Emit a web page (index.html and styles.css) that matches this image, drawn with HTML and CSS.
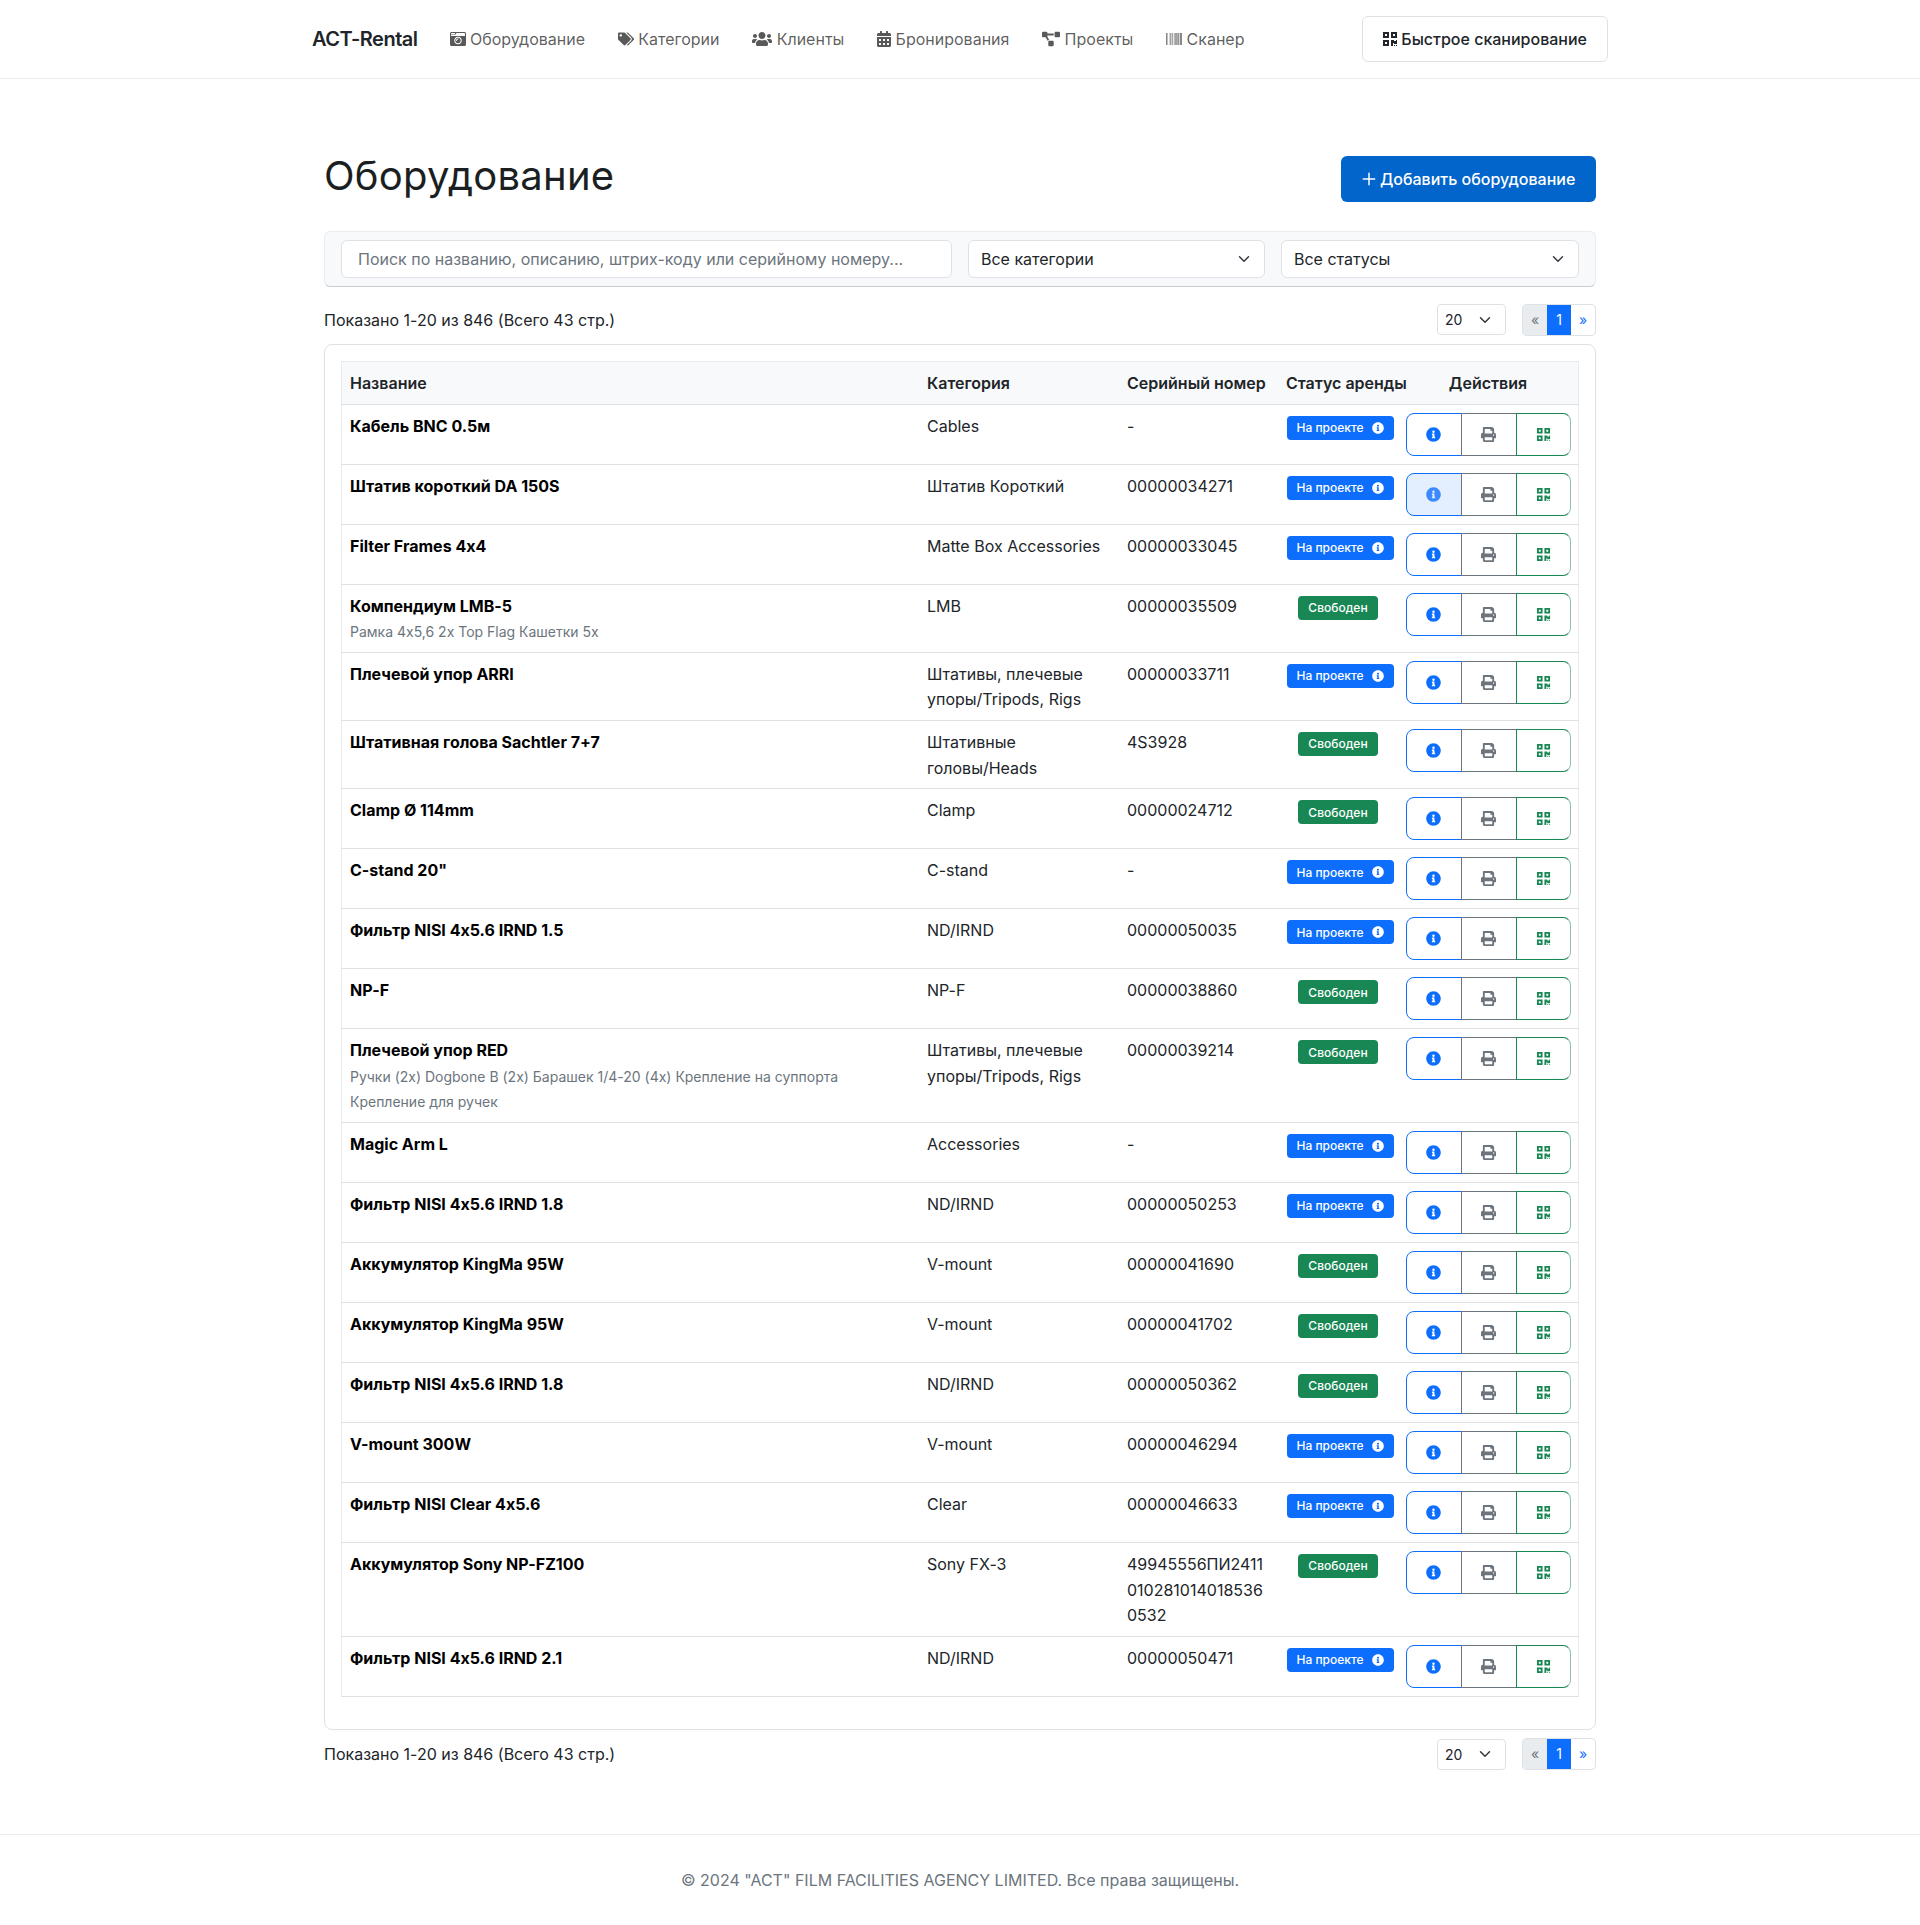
FILE: index.html
```html
<!DOCTYPE html>
<html lang="ru">
<head>
    <meta charset="UTF-8">
    <meta name="viewport" content="width=device-width, initial-scale=1.0">

    <title>Оборудование - ACT-Rental</title>

    <link rel="stylesheet" href="styles.css">

</head>
<body>

    <svg class="icon-defs" xmlns="http://www.w3.org/2000/svg">
        <symbol id="i-camera" viewBox="0 0 512 512"><path d="M48 32C21.5 32 0 53.5 0 80v352c0 26.5 21.5 48 48 48h416c26.5 0 48-21.5 48-48V80c0-26.5-21.5-48-48-48H48zm0 32h106c3.3 0 6 2.7 6 6v20c0 3.3-2.7 6-6 6H38c-3.3 0-6-2.7-6-6V80c0-8.8 7.2-16 16-16zm426 96H38c-3.3 0-6-2.7-6-6v-36c0-3.3 2.7-6 6-6h138l30.2-45.3c1.1-1.7 3-2.7 5-2.7H464c8.8 0 16 7.2 16 16v74c0 3.3-2.7 6-6 6zM256 424c-66.2 0-120-53.8-120-120s53.8-120 120-120 120 53.8 120 120-53.8 120-120 120zm0-208c-48.5 0-88 39.5-88 88s39.5 88 88 88 88-39.5 88-88-39.5-88-88-88zm-48 104c-8.8 0-16-7.2-16-16 0-35.3 28.7-64 64-64 8.8 0 16 7.2 16 16s-7.2 16-16 16c-17.6 0-32 14.4-32 32 0 8.8-7.2 16-16 16z"/></symbol>
        <symbol id="i-tags" viewBox="0 0 640 512"><path d="M497.941 225.941L286.059 14.059A48 48 0 0 0 252.118 0H48C21.49 0 0 21.49 0 48v204.118a48 48 0 0 0 14.059 33.941l211.882 211.882c18.744 18.745 49.136 18.746 67.882 0l204.118-204.118c18.745-18.745 18.745-49.137 0-67.882zM112 160c-26.51 0-48-21.49-48-48s21.49-48 48-48 48 21.49 48 48-21.49 48-48 48zm513.941 133.823L421.823 497.941c-18.745 18.745-49.137 18.745-67.882 0l-.36-.36L527.64 323.522c16.999-16.999 26.36-39.6 26.36-63.64s-9.362-46.641-26.36-63.64L331.397 0h48.721a48 48 0 0 1 33.941 14.059l211.882 211.882c18.745 18.745 18.745 49.137 0 67.882z"/></symbol>
        <symbol id="i-users" viewBox="0 0 640 512"><path d="M96 224c35.3 0 64-28.7 64-64s-28.7-64-64-64-64 28.7-64 64 28.7 64 64 64zm448 0c35.3 0 64-28.7 64-64s-28.7-64-64-64-64 28.7-64 64 28.7 64 64 64zm32 32h-64c-17.6 0-33.5 7.1-45.1 18.6 40.3 22.1 68.9 62 75.1 109.4h66c17.7 0 32-14.3 32-32v-32c0-35.3-28.7-64-64-64zm-256 0c61.9 0 112-50.1 112-112S381.9 32 320 32 208 82.1 208 144s50.1 112 112 112zm76.8 32h-8.3c-20.8 10-43.9 16-68.5 16s-47.6-6-68.5-16h-8.3C179.6 288 128 339.6 128 403.2V432c0 26.5 21.5 48 48 48h288c26.5 0 48-21.5 48-48v-28.8c0-63.6-51.6-115.2-115.2-115.2zm-223.7-13.4C161.5 263.1 145.6 256 128 256H64c-35.3 0-64 28.7-64 64v32c0 17.7 14.3 32 32 32h65.9c6.3-47.4 34.9-87.3 75.2-109.4z"/></symbol>
        <symbol id="i-calendar" viewBox="0 0 448 512"><path d="M0 464c0 26.5 21.5 48 48 48h352c26.5 0 48-21.5 48-48V192H0v272zm320-196c0-6.6 5.4-12 12-12h40c6.6 0 12 5.4 12 12v40c0 6.6-5.4 12-12 12h-40c-6.6 0-12-5.4-12-12v-40zm0 128c0-6.6 5.4-12 12-12h40c6.6 0 12 5.4 12 12v40c0 6.6-5.4 12-12 12h-40c-6.6 0-12-5.4-12-12v-40zM192 268c0-6.6 5.4-12 12-12h40c6.6 0 12 5.4 12 12v40c0 6.6-5.4 12-12 12h-40c-6.6 0-12-5.4-12-12v-40zm0 128c0-6.6 5.4-12 12-12h40c6.6 0 12 5.4 12 12v40c0 6.6-5.4 12-12 12h-40c-6.6 0-12-5.4-12-12v-40zM64 268c0-6.6 5.4-12 12-12h40c6.6 0 12 5.4 12 12v40c0 6.6-5.4 12-12 12H76c-6.6 0-12-5.4-12-12v-40zm0 128c0-6.6 5.4-12 12-12h40c6.6 0 12 5.4 12 12v40c0 6.6-5.4 12-12 12H76c-6.6 0-12-5.4-12-12v-40zM400 64h-48V16c0-8.8-7.2-16-16-16h-32c-8.8 0-16 7.2-16 16v48H160V16c0-8.8-7.2-16-16-16h-32c-8.8 0-16 7.2-16 16v48H48C21.5 64 0 85.5 0 112v48h448v-48c0-26.5-21.5-48-48-48z"/></symbol>
        <symbol id="i-diagram" viewBox="0 0 640 512"><path d="M384 320H256c-17.67 0-32 14.33-32 32v128c0 17.67 14.33 32 32 32h128c17.67 0 32-14.33 32-32V352c0-17.67-14.33-32-32-32zM192 32c0-17.67-14.33-32-32-32H32C14.33 0 0 14.33 0 32v128c0 17.67 14.33 32 32 32h95.72l73.16 128.04C211.98 300.98 232.4 288 256 288h.28L192 175.51V128h224V64H192V32zM608 0H480c-17.67 0-32 14.33-32 32v128c0 17.67 14.33 32 32 32h128c17.67 0 32-14.33 32-32V32c0-17.67-14.33-32-32-32z"/></symbol>
        <symbol id="i-barcode" viewBox="0 0 512 512"><path d="M0 448V64h18v384H0zm26.857-.273V64H36v383.727h-9.143zm27.143 0V64h8.857v383.727H54zm44.857 0V64h8.857v383.727h-8.857zm36 0V64h17.714v383.727h-17.714zm44.857 0V64h8.857v383.727h-8.857zm18 0V64h8.857v383.727h-8.857zm18 0V64h8.857v383.727h-8.857zm35.715 0V64h18v383.727h-18zm44.857 0V64h18v383.727h-18zm35.999 0V64h18.001v383.727h-18.001zm36.001 0V64h18.001v383.727h-18.001zm26.857 0V64h18v383.727h-18zm45.143 0V64h26.857v383.727h-26.857zm35.714 0V64h9.143v383.727H428zm18 .273V64h18v384h-18z"/></symbol>
        <symbol id="i-qr" viewBox="0 0 448 512"><path d="M0 224h192V32H0v192zM64 96h64v64H64V96zm192-64v192h192V32H256zm128 128h-64V96h64v64zM0 480h192V288H0v192zm64-128h64v64H64v-64zm352-64h32v128h-96v-32h-32v96h-64V288h96v32h64v-32zm0 160h32v32h-32v-32zm-64 0h32v32h-32v-32z"/></symbol>
        <symbol id="i-info" viewBox="0 0 512 512"><path d="M256 8C119.043 8 8 119.083 8 256c0 136.997 111.043 248 248 248s248-111.003 248-248C504 119.083 392.957 8 256 8zm0 110c23.196 0 42 18.804 42 42s-18.804 42-42 42-42-18.804-42-42 18.804-42 42-42zm56 254c0 6.627-5.373 12-12 12h-88c-6.627 0-12-5.373-12-12v-24c0-6.627 5.373-12 12-12h12v-64h-12c-6.627 0-12-5.373-12-12v-24c0-6.627 5.373-12 12-12h64c6.627 0 12 5.373 12 12v100h12c6.627 0 12 5.373 12 12v24z"/></symbol>
        <symbol id="i-print" viewBox="0 0 512 512"><path d="M448 192V77.25c0-8.49-3.37-16.62-9.37-22.63L393.37 9.37c-6-6-14.14-9.37-22.63-9.37H96C78.33 0 64 14.33 64 32v160c-35.35 0-64 28.65-64 64v112c0 8.84 7.16 16 16 16h48v96c0 17.67 14.33 32 32 32h320c17.67 0 32-14.33 32-32v-96h48c8.84 0 16-7.16 16-16V256c0-35.35-28.65-64-64-64zm-64 256H128v-96h256v96zm0-224H128V64h192v48c0 8.84 7.16 16 16 16h48v96zm48 72c-13.25 0-24-10.75-24-24 0-13.26 10.75-24 24-24s24 10.74 24 24c0 13.25-10.75 24-24 24z"/></symbol>
        <symbol id="i-plus" viewBox="0 0 16 16"><path d="M8 1.5v13M1.5 8h13" fill="none" stroke="currentColor" stroke-width="1.7" stroke-linecap="round"/></symbol>
    </svg>

    <nav class="navbar">
        <div class="navbar-inner">
            <a class="brand" href="#">ACT-Rental</a>
            <ul class="nav-list">
                <li><a href="#"><svg class="icon w16"><use href="#i-camera"/></svg> Оборудование</a></li>
                <li><a href="#"><svg class="icon w16"><use href="#i-tags"/></svg> Категории</a></li>
                <li><a href="#"><svg class="icon w20"><use href="#i-users"/></svg> Клиенты</a></li>
                <li><a href="#"><svg class="icon w14"><use href="#i-calendar"/></svg> Бронирования</a></li>
                <li><a href="#"><svg class="icon w18"><use href="#i-diagram"/></svg> Проекты</a></li>
                <li><a href="#"><svg class="icon w16"><use href="#i-barcode"/></svg> Сканер</a></li>
            </ul>
            <button class="btn-scan" type="button"><svg class="icon w14"><use href="#i-qr"/></svg> Быстрое сканирование</button>
        </div>
    </nav>

    <main class="page">

        <div class="page-head">
            <h1>Оборудование</h1>
            <button class="btn-add" type="button"><svg class="icon w14"><use href="#i-plus"/></svg> Добавить оборудование</button>
        </div>

        <div class="filters">
            <input class="filter-search" type="text" placeholder="Поиск по названию, описанию, штрих-коду или серийному номеру...">
            <select class="filter-select">
                <option>Все категории</option>
            </select>
            <select class="filter-select">
                <option>Все статусы</option>
            </select>
        </div>

        <div class="list-bar">
            <span>Показано 1-20 из 846 (Всего 43 стр.)</span>
            <div class="list-tools">
                <select class="per-page">
                    <option>20</option>
                </select>
                <ul class="pager">
                    <li class="off">«</li>
                    <li class="on">1</li>
                    <li>»</li>
                </ul>
            </div>
        </div>

        <div class="table-card">
            <table class="items">
                <thead>
                    <tr>
                        <th class="col-name">Название</th>
                        <th class="col-cat">Категория</th>
                        <th class="col-serial">Серийный номер</th>
                        <th class="col-status">Статус аренды</th>
                        <th class="col-actions">Действия</th>
                    </tr>
                </thead>
                <tbody>
                    <tr>
                        <td><b>Кабель BNC 0.5м</b></td>
                        <td>Cables</td>
                        <td>-</td>
                        <td class="cell-status"><span class="badge busy">На проекте <svg class="icon w12"><use href="#i-info"/></svg></span></td>
                        <td><div class="actions"><a class="act blue" href="#"><svg class="icon"><use href="#i-info"/></svg></a><a class="act gray" href="#"><svg class="icon"><use href="#i-print"/></svg></a><a class="act green" href="#"><svg class="icon"><use href="#i-qr"/></svg></a></div></td>
                    </tr>
                    <tr>
                        <td><b>Штатив короткий DA 150S</b></td>
                        <td>Штатив Короткий</td>
                        <td>00000034271</td>
                        <td class="cell-status"><span class="badge busy">На проекте <svg class="icon w12"><use href="#i-info"/></svg></span></td>
                        <td><div class="actions"><a class="act blue hover" href="#"><svg class="icon"><use href="#i-info"/></svg></a><a class="act gray" href="#"><svg class="icon"><use href="#i-print"/></svg></a><a class="act green" href="#"><svg class="icon"><use href="#i-qr"/></svg></a></div></td>
                    </tr>
                    <tr>
                        <td><b>Filter Frames 4x4</b></td>
                        <td>Matte Box Accessories</td>
                        <td>00000033045</td>
                        <td class="cell-status"><span class="badge busy">На проекте <svg class="icon w12"><use href="#i-info"/></svg></span></td>
                        <td><div class="actions"><a class="act blue" href="#"><svg class="icon"><use href="#i-info"/></svg></a><a class="act gray" href="#"><svg class="icon"><use href="#i-print"/></svg></a><a class="act green" href="#"><svg class="icon"><use href="#i-qr"/></svg></a></div></td>
                    </tr>
                    <tr>
                        <td><b>Компендиум LMB-5</b><br><small>Рамка 4x5,6 2x Top Flag Кашетки 5x</small></td>
                        <td>LMB</td>
                        <td>00000035509</td>
                        <td class="cell-status"><span class="badge free">Свободен</span></td>
                        <td><div class="actions"><a class="act blue" href="#"><svg class="icon"><use href="#i-info"/></svg></a><a class="act gray" href="#"><svg class="icon"><use href="#i-print"/></svg></a><a class="act green" href="#"><svg class="icon"><use href="#i-qr"/></svg></a></div></td>
                    </tr>
                    <tr>
                        <td><b>Плечевой упор ARRI</b></td>
                        <td>Штативы, плечевые упоры/Tripods, Rigs</td>
                        <td>00000033711</td>
                        <td class="cell-status"><span class="badge busy">На проекте <svg class="icon w12"><use href="#i-info"/></svg></span></td>
                        <td><div class="actions"><a class="act blue" href="#"><svg class="icon"><use href="#i-info"/></svg></a><a class="act gray" href="#"><svg class="icon"><use href="#i-print"/></svg></a><a class="act green" href="#"><svg class="icon"><use href="#i-qr"/></svg></a></div></td>
                    </tr>
                    <tr>
                        <td><b>Штативная голова Sachtler 7+7</b></td>
                        <td>Штативные головы/Heads</td>
                        <td>4S3928</td>
                        <td class="cell-status"><span class="badge free">Свободен</span></td>
                        <td><div class="actions"><a class="act blue" href="#"><svg class="icon"><use href="#i-info"/></svg></a><a class="act gray" href="#"><svg class="icon"><use href="#i-print"/></svg></a><a class="act green" href="#"><svg class="icon"><use href="#i-qr"/></svg></a></div></td>
                    </tr>
                    <tr>
                        <td><b>Clamp Ø 114mm</b></td>
                        <td>Clamp</td>
                        <td>00000024712</td>
                        <td class="cell-status"><span class="badge free">Свободен</span></td>
                        <td><div class="actions"><a class="act blue" href="#"><svg class="icon"><use href="#i-info"/></svg></a><a class="act gray" href="#"><svg class="icon"><use href="#i-print"/></svg></a><a class="act green" href="#"><svg class="icon"><use href="#i-qr"/></svg></a></div></td>
                    </tr>
                    <tr>
                        <td><b>C-stand 20"</b></td>
                        <td>C-stand</td>
                        <td>-</td>
                        <td class="cell-status"><span class="badge busy">На проекте <svg class="icon w12"><use href="#i-info"/></svg></span></td>
                        <td><div class="actions"><a class="act blue" href="#"><svg class="icon"><use href="#i-info"/></svg></a><a class="act gray" href="#"><svg class="icon"><use href="#i-print"/></svg></a><a class="act green" href="#"><svg class="icon"><use href="#i-qr"/></svg></a></div></td>
                    </tr>
                    <tr>
                        <td><b>Фильтр NISI 4x5.6 IRND 1.5</b></td>
                        <td>ND/IRND</td>
                        <td>00000050035</td>
                        <td class="cell-status"><span class="badge busy">На проекте <svg class="icon w12"><use href="#i-info"/></svg></span></td>
                        <td><div class="actions"><a class="act blue" href="#"><svg class="icon"><use href="#i-info"/></svg></a><a class="act gray" href="#"><svg class="icon"><use href="#i-print"/></svg></a><a class="act green" href="#"><svg class="icon"><use href="#i-qr"/></svg></a></div></td>
                    </tr>
                    <tr>
                        <td><b>NP-F</b></td>
                        <td>NP-F</td>
                        <td>00000038860</td>
                        <td class="cell-status"><span class="badge free">Свободен</span></td>
                        <td><div class="actions"><a class="act blue" href="#"><svg class="icon"><use href="#i-info"/></svg></a><a class="act gray" href="#"><svg class="icon"><use href="#i-print"/></svg></a><a class="act green" href="#"><svg class="icon"><use href="#i-qr"/></svg></a></div></td>
                    </tr>
                    <tr>
                        <td><b>Плечевой упор RED</b><br><small>Ручки (2x) Dogbone B (2x) Барашек 1/4-20 (4x) Крепление на суппорта Крепление для ручек</small></td>
                        <td>Штативы, плечевые упоры/Tripods, Rigs</td>
                        <td>00000039214</td>
                        <td class="cell-status"><span class="badge free">Свободен</span></td>
                        <td><div class="actions"><a class="act blue" href="#"><svg class="icon"><use href="#i-info"/></svg></a><a class="act gray" href="#"><svg class="icon"><use href="#i-print"/></svg></a><a class="act green" href="#"><svg class="icon"><use href="#i-qr"/></svg></a></div></td>
                    </tr>
                    <tr>
                        <td><b>Magic Arm L</b></td>
                        <td>Accessories</td>
                        <td>-</td>
                        <td class="cell-status"><span class="badge busy">На проекте <svg class="icon w12"><use href="#i-info"/></svg></span></td>
                        <td><div class="actions"><a class="act blue" href="#"><svg class="icon"><use href="#i-info"/></svg></a><a class="act gray" href="#"><svg class="icon"><use href="#i-print"/></svg></a><a class="act green" href="#"><svg class="icon"><use href="#i-qr"/></svg></a></div></td>
                    </tr>
                    <tr>
                        <td><b>Фильтр NISI 4x5.6 IRND 1.8</b></td>
                        <td>ND/IRND</td>
                        <td>00000050253</td>
                        <td class="cell-status"><span class="badge busy">На проекте <svg class="icon w12"><use href="#i-info"/></svg></span></td>
                        <td><div class="actions"><a class="act blue" href="#"><svg class="icon"><use href="#i-info"/></svg></a><a class="act gray" href="#"><svg class="icon"><use href="#i-print"/></svg></a><a class="act green" href="#"><svg class="icon"><use href="#i-qr"/></svg></a></div></td>
                    </tr>
                    <tr>
                        <td><b>Аккумулятор KingMa 95W</b></td>
                        <td>V-mount</td>
                        <td>00000041690</td>
                        <td class="cell-status"><span class="badge free">Свободен</span></td>
                        <td><div class="actions"><a class="act blue" href="#"><svg class="icon"><use href="#i-info"/></svg></a><a class="act gray" href="#"><svg class="icon"><use href="#i-print"/></svg></a><a class="act green" href="#"><svg class="icon"><use href="#i-qr"/></svg></a></div></td>
                    </tr>
                    <tr>
                        <td><b>Аккумулятор KingMa 95W</b></td>
                        <td>V-mount</td>
                        <td>00000041702</td>
                        <td class="cell-status"><span class="badge free">Свободен</span></td>
                        <td><div class="actions"><a class="act blue" href="#"><svg class="icon"><use href="#i-info"/></svg></a><a class="act gray" href="#"><svg class="icon"><use href="#i-print"/></svg></a><a class="act green" href="#"><svg class="icon"><use href="#i-qr"/></svg></a></div></td>
                    </tr>
                    <tr>
                        <td><b>Фильтр NISI 4x5.6 IRND 1.8</b></td>
                        <td>ND/IRND</td>
                        <td>00000050362</td>
                        <td class="cell-status"><span class="badge free">Свободен</span></td>
                        <td><div class="actions"><a class="act blue" href="#"><svg class="icon"><use href="#i-info"/></svg></a><a class="act gray" href="#"><svg class="icon"><use href="#i-print"/></svg></a><a class="act green" href="#"><svg class="icon"><use href="#i-qr"/></svg></a></div></td>
                    </tr>
                    <tr>
                        <td><b>V-mount 300W</b></td>
                        <td>V-mount</td>
                        <td>00000046294</td>
                        <td class="cell-status"><span class="badge busy">На проекте <svg class="icon w12"><use href="#i-info"/></svg></span></td>
                        <td><div class="actions"><a class="act blue" href="#"><svg class="icon"><use href="#i-info"/></svg></a><a class="act gray" href="#"><svg class="icon"><use href="#i-print"/></svg></a><a class="act green" href="#"><svg class="icon"><use href="#i-qr"/></svg></a></div></td>
                    </tr>
                    <tr>
                        <td><b>Фильтр NISI Clear 4x5.6</b></td>
                        <td>Clear</td>
                        <td>00000046633</td>
                        <td class="cell-status"><span class="badge busy">На проекте <svg class="icon w12"><use href="#i-info"/></svg></span></td>
                        <td><div class="actions"><a class="act blue" href="#"><svg class="icon"><use href="#i-info"/></svg></a><a class="act gray" href="#"><svg class="icon"><use href="#i-print"/></svg></a><a class="act green" href="#"><svg class="icon"><use href="#i-qr"/></svg></a></div></td>
                    </tr>
                    <tr>
                        <td><b>Аккумулятор Sony NP-FZ100</b></td>
                        <td>Sony FX-3</td>
                        <td class="cell-serial">49945556ПИ2411010281014018536 0532</td>
                        <td class="cell-status"><span class="badge free">Свободен</span></td>
                        <td><div class="actions"><a class="act blue" href="#"><svg class="icon"><use href="#i-info"/></svg></a><a class="act gray" href="#"><svg class="icon"><use href="#i-print"/></svg></a><a class="act green" href="#"><svg class="icon"><use href="#i-qr"/></svg></a></div></td>
                    </tr>
                    <tr>
                        <td><b>Фильтр NISI 4x5.6 IRND 2.1</b></td>
                        <td>ND/IRND</td>
                        <td>00000050471</td>
                        <td class="cell-status"><span class="badge busy">На проекте <svg class="icon w12"><use href="#i-info"/></svg></span></td>
                        <td><div class="actions"><a class="act blue" href="#"><svg class="icon"><use href="#i-info"/></svg></a><a class="act gray" href="#"><svg class="icon"><use href="#i-print"/></svg></a><a class="act green" href="#"><svg class="icon"><use href="#i-qr"/></svg></a></div></td>
                    </tr>
                </tbody>
            </table>
        </div>

        <div class="list-bar">
            <span>Показано 1-20 из 846 (Всего 43 стр.)</span>
            <div class="list-tools">
                <select class="per-page">
                    <option>20</option>
                </select>
                <ul class="pager">
                    <li class="off">«</li>
                    <li class="on">1</li>
                    <li>»</li>
                </ul>
            </div>
        </div>

    </main>

    <footer class="footer">© 2024 "ACT" FILM FACILITIES AGENCY LIMITED. Все права защищены.</footer>

</body>
</html>
```

FILE: styles.css
```css
* {
    font-feature-settings: "calt" 0;
}
body {
    margin: 0;
    font-family: Inter, "Noto Sans", sans-serif;
    font-size: 16px;
    line-height: 1.6;
    color: #212529;
    background-color: #fff;
}
a {
    color: inherit;
    text-decoration: none;
}
.icon-defs {
    display: none;
}
.icon {
    display: inline-block;
    height: 1em;
    width: 1em;
    fill: currentColor;
    vertical-align: -0.125em;
}
.w12 { width: 12px; height: 12px; }
.w14 { width: 14px; }
.w16 { width: 16px; }
.w18 { width: 18px; }
.w20 { width: 20px; }

/* navbar */
.navbar {
    padding: 16px 0;
    border-bottom: 1px solid #e9ecef;
}
.navbar-inner {
    width: 1296px;
    margin: 0 auto;
    display: flex;
    align-items: center;
}
.brand {
    font-size: 20px;
    font-weight: 600;
    letter-spacing: -0.025em;
    margin-right: 16px;
}
.nav-list {
    display: flex;
    flex: 1;
    list-style: none;
    margin: 0;
    padding: 0;
}
.nav-list a {
    display: block;
    padding: 9px 16.7px 7px 16px;
    color: rgba(0, 0, 0, .65);
}
.btn-scan {
    height: 46px;
    padding: 1px 20px 0;
    border: 1px solid #dee2e6;
    border-radius: 6px;
    background-color: #fff;
    color: #212529;
    font: 500 16px/1.6 Inter, sans-serif;
}

/* page */
.page {
    width: 1272px;
    margin: 0 auto;
    padding-top: 72px;
}
.page-head {
    display: flex;
    justify-content: space-between;
    align-items: center;
    margin-bottom: 24px;
}
h1 {
    margin: 1px 0 7px;
    font-size: 40px;
    font-weight: 400;
    line-height: 1.2;
    letter-spacing: .25px;
    color: #1c1f22;
}
.btn-add {
    width: 255px;
    height: 46px;
    padding: 1px 0 0;
    border: 0;
    border-radius: 6px;
    background-color: #0165cc;
    color: #fff;
    font: 500 16px/1.6 Inter, sans-serif;
}

/* filters */
.filters {
    display: grid;
    grid-template-columns: 611px 297px 298px;
    gap: 16px;
    padding: 8px 16px;
    margin-bottom: 16px;
    background-color: #f8f9fa;
    border: 1px solid #e9ecef;
    border-bottom-color: #c9cdd1;
    border-radius: 6px;
}
.filter-search,
.filter-select {
    box-sizing: border-box;
    height: 38px;
    padding: 1px 12px 0;
    border: 1px solid #dee2e6;
    border-radius: 6px;
    background-color: #fff;
    color: #212529;
    font: 400 16px/1.6 Inter, sans-serif;
}
.filter-search {
    padding: 0 12px 0 16px;
}
.filter-search::placeholder {
    color: #6c757d;
}
.filter-select,
.per-page {
    appearance: none;
    background-image: url("data:image/svg+xml,%3csvg xmlns='http://www.w3.org/2000/svg' viewBox='0 0 16 16'%3e%3cpath fill='none' stroke='%23343a40' stroke-linecap='round' stroke-linejoin='round' stroke-width='2' d='m2 5 6 6 6-6'/%3e%3c/svg%3e");
    background-repeat: no-repeat;
    background-position: right 12px center;
    background-size: 16px 12px;
}

/* count + pagination */
.list-bar {
    display: flex;
    justify-content: space-between;
    align-items: center;
    min-height: 33px;
    margin-bottom: 8px;
}
.list-bar span {
    padding-top: 2px;
}
.list-tools {
    display: flex;
    align-items: center;
    gap: 16px;
}
.per-page {
    box-sizing: border-box;
    width: 69px;
    height: 31px;
    padding: 0 7px;
    border: 1px solid #dee2e6;
    border-radius: 4px;
    background-color: #fff;
    background-position: right 12px center;
    color: #212529;
    font: 400 14px/1.5 Inter, sans-serif;
}
.pager {
    display: flex;
    list-style: none;
    margin: 0;
    padding: 0;
    font-size: 14px;
    line-height: 30px;
    border: 1px solid #dee2e6;
    border-radius: 4px;
    overflow: hidden;
    color: #0d6efd;
}
.pager li {
    width: 24px;
    text-align: center;
}
.pager .off {
    background-color: #e9ecef;
    color: #6c757d;
}
.pager .on {
    background-color: #0d6efd;
    color: #fff;
}

/* table */
.table-card {
    padding: 16px 16px 32px;
    margin-bottom: 8px;
    border: 1px solid #dee2e6;
    border-radius: 8px;
}
.items {
    width: 100%;
    table-layout: fixed;
    border-collapse: collapse;
    border: 1px solid #e9ecef;
}
.items th,
.items td {
    padding: 9px 8px 7px;
    text-align: left;
    vertical-align: top;
    border-bottom: 1px solid #dee2e6;
}
.items th {
    font-weight: 600;
    background-color: #f8f9fa;
}
.items b {
    color: #000;
    font-weight: 700;
}
.items small {
    font-size: 14px;
    color: #6c757d;
}
.col-cat { width: 184px; }
.col-serial { width: 143px; }
.col-status { width: 104px; white-space: nowrap; }
.col-actions { width: 164px; }
.items th.col-actions {
    text-align: center;
}
.items .cell-status {
    text-align: center;
    padding-left: 0;
    padding-right: 0;
}
.cell-serial {
    word-break: break-all;
}

.badge {
    display: inline-flex;
    align-items: center;
    justify-content: space-between;
    height: 24px;
    box-sizing: border-box;
    padding: 0 10px;
    border-radius: 4px;
    color: #fff;
    font-size: 12px;
    font-weight: 500;
    white-space: nowrap;
    vertical-align: top;
    margin-top: 2px;
}
.badge.busy {
    background-color: #0d6efd;
    width: 107px;
    margin-left: 4px;
}
.badge.free { background-color: #198754; }

.actions {
    display: flex;
    margin: -1px 0 1px;
}
.act {
    box-sizing: border-box;
    display: flex;
    flex: none;
    align-items: center;
    justify-content: center;
    width: 55.8px;
    height: 43px;
    margin-right: -1px;
    border: 1px solid;
    font-size: 15px;
}
.act.blue {
    color: #0d6efd;
    border-radius: 8px 0 0 8px;
}
.act.hover {
    background-color: #e3eefe;
    color: #3b89fd;
    border-color: #0d6efd;
}
.act.gray {
    color: #6c757d;
    position: relative;
}
.act.green {
    color: #198754;
    margin-right: 0;
    border-radius: 0 8px 8px 0;
    border-right-color: #8cc3a9;
    position: relative;
}

/* footer */
.footer {
    margin-top: 63px;
    padding: 33px 0 31px;
    border-top: 1px solid #e9ecef;
    text-align: center;
    color: #6c757d;
}
```
